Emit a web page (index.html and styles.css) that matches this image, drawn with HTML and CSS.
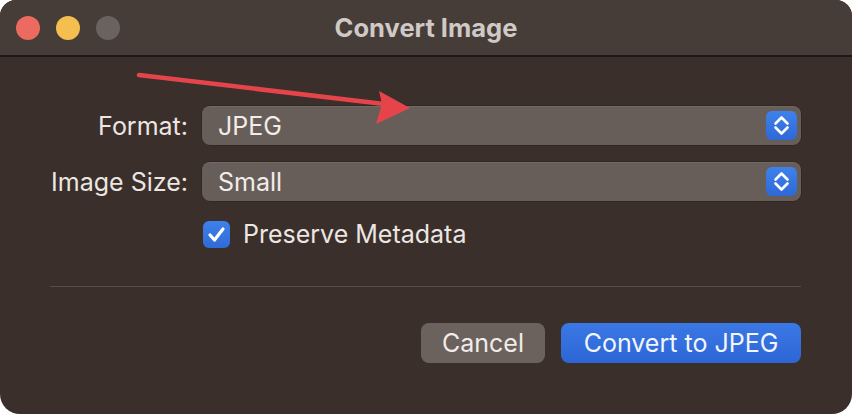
FILE: index.html
```html
<!DOCTYPE html>
<html>
<head>
<meta charset="utf-8">
<link rel="stylesheet" href="styles.css">
</head>
<body>
<div class="window">
  <div class="titlebar">
    <div class="lights">
      <span class="light red"></span>
      <span class="light yellow"></span>
      <span class="light gray"></span>
    </div>
    <div class="title">Convert Image</div>
    <div></div>
  </div>
  <div class="content">
    <div class="form">
      <label class="label">Format:</label>
      <div class="popup">
        <span class="popup-text">JPEG</span>
        <span class="stepper">
          <svg width="31" height="29" viewBox="0 0 31 29"><path d="M9.5 12.5 L15.5 6.5 L21.5 12.5" fill="none" stroke="#fff" stroke-width="2.6" stroke-linecap="round" stroke-linejoin="round"/><path d="M9.5 16.5 L15.5 22.5 L21.5 16.5" fill="none" stroke="#fff" stroke-width="2.6" stroke-linecap="round" stroke-linejoin="round"/></svg>
        </span>
      </div>
      <label class="label">Image Size:</label>
      <div class="popup">
        <span class="popup-text">Small</span>
        <span class="stepper">
          <svg width="31" height="29" viewBox="0 0 31 29"><path d="M9.5 12.5 L15.5 6.5 L21.5 12.5" fill="none" stroke="#fff" stroke-width="2.6" stroke-linecap="round" stroke-linejoin="round"/><path d="M9.5 16.5 L15.5 22.5 L21.5 16.5" fill="none" stroke="#fff" stroke-width="2.6" stroke-linecap="round" stroke-linejoin="round"/></svg>
        </span>
      </div>
      <div></div>
      <div class="check-row">
        <span class="checkbox">
          <svg width="27" height="27" viewBox="0 0 27 27"><path d="M7 14 L11.5 19 L20 8" fill="none" stroke="#fff" stroke-width="3.2" stroke-linecap="round" stroke-linejoin="round"/></svg>
        </span>
        <span class="check-label">Preserve Metadata</span>
      </div>
    </div>
    <div class="separator"></div>
    <div class="buttons">
      <button class="btn cancel">Cancel</button>
      <button class="btn primary">Convert to JPEG</button>
    </div>
  </div>
  <svg class="arrow" width="852" height="414" viewBox="0 0 852 414">
    <line x1="139" y1="75" x2="384" y2="104" stroke="#e5454a" stroke-width="4.5" stroke-linecap="round"/>
    <path d="M410 108 L376 124 L382 104 L379 91 Z" fill="#e5454a"/>
  </svg>
</div>
</body>
</html>
```
FILE: styles.css
```css
html, body {
  margin: 0;
  padding: 0;
  background: #ffffff;
}
body {
  font-family: "Inter", "Liberation Sans", sans-serif;
}
.window {
  position: relative;
  width: 852px;
  height: 414px;
  background: #3a2f2b;
  border-radius: 16px 16px 20px 20px;
  overflow: hidden;
}
.titlebar {
  height: 55px;
  background: #463d39;
  border-bottom: 2px solid #1f1916;
  display: grid;
  grid-template-columns: 1fr auto 1fr;
  align-items: center;
}
.lights {
  display: flex;
  gap: 16px;
  padding-left: 16px;
  padding-top: 1px;
}
.light {
  width: 24px;
  height: 24px;
  border-radius: 50%;
}
.red { background: #ec6a5f; }
.yellow { background: #f4bf4f; }
.gray { background: #6a625f; }
.title {
  color: #d0c9c5;
  font-size: 25.5px;
  font-weight: 700;
  line-height: 30px;
}
.content {
  padding: 49px 51px 50px 50px;
}
.form {
  display: grid;
  grid-template-columns: 138px 1fr;
  column-gap: 14px;
  row-gap: 17px;
  align-items: center;
}
.label {
  text-align: right;
  color: #ece6e2;
  font-size: 25px;
  line-height: 30px;
  white-space: nowrap;
}
.popup {
  height: 39px;
  box-sizing: border-box;
  background: #685e59;
  border-radius: 8px;
  box-shadow: inset 0 1px 0 rgba(255,255,255,0.08), 0 0 0 0.5px rgba(0,0,0,0.3);
  display: flex;
  align-items: center;
  justify-content: space-between;
  padding: 0 4px 0 16px;
}
.popup-text {
  color: #f1ece9;
  font-size: 25px;
  line-height: 30px;
}
.stepper {
  width: 31px;
  height: 29px;
  border-radius: 6px;
  background: linear-gradient(#3f82ec, #2d68d6);
  display: flex;
}
.check-row {
  display: flex;
  align-items: center;
  gap: 13px;
  height: 32px;
  padding-left: 1px;
}
.checkbox {
  width: 27px;
  height: 27px;
  border-radius: 6px;
  background: linear-gradient(#3f80ea, #2f6bd8);
  display: flex;
}
.check-label {
  color: #ece6e2;
  font-size: 25px;
  line-height: 30px;
}
.separator {
  height: 1px;
  background: #564c48;
  margin-top: 36px;
}
.buttons {
  display: flex;
  justify-content: flex-end;
  gap: 16px;
  margin-top: 36px;
}
.btn {
  height: 40px;
  border: none;
  border-radius: 8px;
  font-family: "Inter", "Liberation Sans", sans-serif;
  font-size: 25px;
  line-height: 30px;
  color: #f1ece9;
  padding: 0;
}
.cancel {
  width: 124px;
  background: #6b615d;
}
.primary {
  width: 240px;
  background: linear-gradient(#3a78e6, #2d66d4);
  color: #f2f5fb;
}
.arrow {
  position: absolute;
  left: 0;
  top: 0;
  pointer-events: none;
}
```
